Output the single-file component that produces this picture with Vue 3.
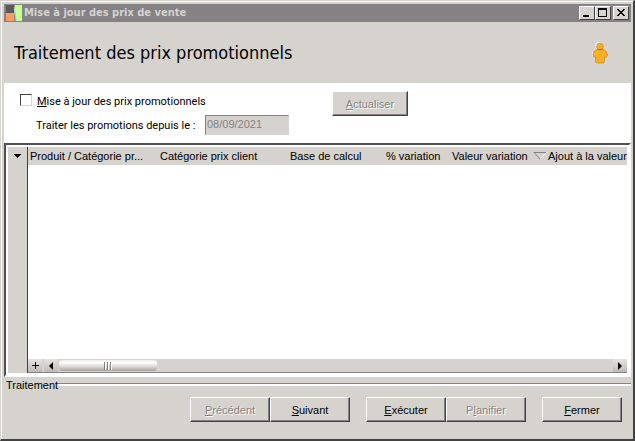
<template>
  <main class="window">
    <header class="title-bar">
      <svg class="app-icon" viewBox="0 0 16 17" aria-hidden="true">
        <path fill="#5a5a58" d="M0 0h8v8H0z" />
        <path fill="#ff9a63" d="M0 8h8v8H0z" />
        <path fill="#848284" d="M8 0h1v17H8z" />
        <path fill="#c6ff94" d="M9 0h7v16h-6L8 5z" />
        <path stroke="#a5c3d6" fill="none" d="M8.500 5l1.500 11" />
      </svg>
      <span class="title">Mise à jour des prix de vente</span>
      <div class="title-buttons">
        <button type="button" aria-label="Réduire">
          <svg viewBox="0 0 12 10"><path d="M2 7h6v2H2z" /></svg>
        </button>
        <button type="button" aria-label="Agrandir">
          <svg viewBox="0 0 12 10"><path fill-rule="evenodd" d="M1 0h9v9H1zM2 2v6h7V2z" /></svg>
        </button>
        <button type="button" class="close" aria-label="Fermer la fenêtre">
          <svg viewBox="0 0 12 10"><path d="M2 1h2v1h1v1h2V2h1V1h2v1H9v1H8v1H7v1h1v1h1v1h1v1H8V7H7V6H5v1H4v1H2V7h1V6h1V5h1V4H4V3H3V2H2z" /></svg>
        </button>
      </div>
    </header>

    <section class="banner">
      <h1>Traitement des prix promotionnels</h1>
      <svg class="person" viewBox="0 0 18 22" aria-hidden="true">
        <g fill="#fff" opacity=".7">
          <circle cx="8" cy="4" r="4" />
          <path d="M4 7h9l3 3v5h-3v5H4v-5l-3-1v-4z" />
        </g>
        <g fill="#ffae21" stroke="#c68a31" stroke-width=".8">
          <path d="M5.500 7.500h7l2.500 1.500 1.500 4-1 2h-2v4.500l-1 1.500h-7l-1-1.500V15l-2-.5-.5-2 1-3.500z" />
          <circle cx="9" cy="4.500" r="3.300" />
        </g>
        <path fill="none" stroke="#a57131" d="M6.500 7.700h5" />
      </svg>
    </section>

    <section class="options">
      <div class="fields">
        <label class="check">
          <input v-model="updatePrices" type="checkbox" />
          <span><u>M</u>ise à jour des prix promotionnels</span>
        </label>
        <div class="date-row">
          <label for="since">Traiter les promotions depuis le :</label>
          <input id="since" v-model="since" type="text" disabled />
        </div>
      </div>
      <button type="button" class="btn refresh" disabled><u>A</u>ctualiser</button>
    </section>

    <section class="grid">
      <button type="button" class="selector" aria-label="Colonnes">
        <svg viewBox="0 0 7 4"><path d="M0 0h7v1H6v1H5v1H4v1H3V3H2V2H1V1H0z" /></svg>
      </button>
      <div class="sheet">
        <table>
          <colgroup>
            <col v-for="col in columns" :key="col.label" :class="col.size" />
          </colgroup>
          <thead>
            <tr>
              <th v-for="col in columns" :key="col.label" scope="col">
                <svg v-if="col.sorted" class="sort" viewBox="0 0 14 8">
                  <path fill="none" stroke="#848284" d="M13 .5H1l6 6.500" />
                  <path fill="none" stroke="#fff" d="M13.500.5L7 7" />
                </svg>{{ col.label }}
              </th>
            </tr>
          </thead>
        </table>
        <div class="scrollbar">
          <button type="button" class="add" aria-label="Ajouter">
            <svg viewBox="0 0 7 7"><path d="M3 0h1v3h3v1H4v3H3V4H0V3h3z" /></svg>
          </button>
          <button type="button" class="arrow" aria-label="Défiler à gauche">
            <svg viewBox="0 0 4 8"><path d="M4 0v8L0 4z" /></svg>
          </button>
          <div class="track">
            <div class="thumb"><i></i><i></i><i></i></div>
          </div>
          <button type="button" class="arrow" aria-label="Défiler à droite">
            <svg viewBox="0 0 4 8"><path d="M0 0v8l4-4z" /></svg>
          </button>
        </div>
      </div>
    </section>

    <div class="group-line"><span>Traitement</span></div>

    <footer class="actions">
      <div v-for="(group, i) in actions" :key="i" class="action-group">
        <button
          v-for="action in group"
          :key="action.key"
          type="button"
          class="btn"
          :disabled="action.disabled"
        >{{ action.before }}<u>{{ action.key }}</u>{{ action.after }}</button>
      </div>
    </footer>
  </main>
</template>

<script setup>
import { ref } from 'vue';

const updatePrices = ref(false);
const since = ref('08/09/2021');

const columns = [
  { label: 'Produit / Catégorie pr...', size: 'wide' },
  { label: 'Catégorie prix client', size: 'wide' },
  { label: 'Base de calcul', size: 'medium' },
  { label: '% variation', size: 'small' },
  { label: 'Valeur variation', size: 'value' },
  { label: 'Ajout à la valeur', size: 'rest', sorted: true },
];

const actions = [
  [
    { key: 'P', after: 'récédent', disabled: true },
    { key: 'S', after: 'uivant' },
  ],
  [
    { key: 'E', after: 'xécuter' },
    { before: 'P', key: 'l', after: 'anifier', disabled: true },
  ],
  [{ key: 'F', after: 'ermer' }],
];
</script>

<style>
body {
  margin: 0;
  background: #d6d3ce;
}
</style>

<style scoped>
* {
  box-sizing: border-box;
}

.window {
  display: flex;
  flex-direction: column;
  min-height: 100vh;
  padding: 3px 2px 2px 3px;
  border: 1px solid #d6d3ce;
  border-right: 2px solid #424142;
  border-bottom: 2px solid #424142;
  box-shadow: inset 1px 1px #fff;
  background: #d6d3ce;
  color: #000;
  font-family: "Liberation Sans", Arial, sans-serif;
  font-size: 11px;
  line-height: 14px;
}

button,
input {
  font: inherit;
  color: inherit;
}

button {
  padding: 0;
}

/* title bar */
.title-bar {
  display: flex;
  align-items: center;
  height: 18px;
  padding: 0 2px;
  background: #848284;
  color: #d6d3ce;
}

.app-icon {
  width: 16px;
  height: 17px;
}

.title {
  flex: 1;
  margin-left: 2px;
  font-family: "DejaVu Sans Condensed", "DejaVu Sans", sans-serif;
  font-weight: bold;
}

.title-buttons {
  display: flex;
}

.title-buttons button {
  display: flex;
  width: 16px;
  height: 14px;
  padding: 1px;
  border: 1px solid;
  border-color: #fff #424142 #424142 #fff;
  background: #d6d3ce;
}

.title-buttons svg {
  width: 12px;
  height: 10px;
}

.title-buttons .close {
  margin-left: 2px;
}

/* banner */
.banner {
  display: flex;
  align-items: center;
  justify-content: space-between;
  height: 61px;
  padding: 0 22px 0 10px;
}

h1 {
  margin: 0;
  font-family: "DejaVu Sans Condensed", "DejaVu Sans", sans-serif;
  font-size: 18px;
  font-weight: normal;
  line-height: 22px;
}

.person {
  width: 18px;
  height: 22px;
}

/* options */
.options {
  display: flex;
  align-items: flex-start;
  height: 60px;
  padding: 8px 16px;
  background: #fff;
}

.fields {
  width: 312px;
}

.check {
  display: flex;
  align-items: center;
  gap: 5px;
  height: 20px;
}

.check input {
  appearance: none;
  width: 12px;
  height: 12px;
  margin: 0 0 2px;
  border: 1px solid;
  border-color: #424142 #d6d3ce #d6d3ce #424142;
  background: #fff;
}

.check input:checked {
  background: #424142;
}

.check span,
.date-row label {
  padding-top: 2px;
  font-family: Roboto, "Liberation Sans", sans-serif;
}

.date-row {
  display: flex;
  align-items: center;
  padding: 4px 0 0 16px;
}

.date-row label {
  width: 169px;
}

.date-row input {
  width: 84px;
  height: 20px;
  padding: 0 0 2px 1px;
  border: 1px solid;
  border-color: #848284 #d6d3ce #d6d3ce #848284;
  background: #d6d3ce;
  color: #848284;
}

.btn {
  width: 80px;
  height: 25px;
  border: 1px solid;
  border-color: #fff #424142 #424142 #fff;
  box-shadow: inset -1px -1px #848284;
  background: #d6d3ce;
}

.btn:disabled {
  color: #848284;
  text-shadow: 1px 1px #fff;
}

.refresh {
  width: 76px;
}

/* grid */
.grid {
  display: flex;
  flex: 1;
  border: 2px solid;
  border-color: #525152 #fff #fff #525152;
  padding: 2px;
  background: #fff;
}

.selector {
  display: flex;
  justify-content: center;
  width: 20px;
  padding-top: 7px;
  border: 0;
  border-right: 1px solid #424142;
  background: #d6d3ce;
}

.selector svg {
  width: 7px;
  height: 4px;
}

.sheet {
  display: flex;
  flex: 1;
  flex-direction: column;
  justify-content: space-between;
  min-width: 0;
}

table {
  width: 100%;
  table-layout: fixed;
  border-collapse: collapse;
  background: #d6d3ce;
}

.wide {
  width: 130px;
}

.medium {
  width: 96px;
}

.small {
  width: 66px;
}

.value {
  width: 81px;
}

th {
  height: 18px;
  padding: 0 0 0 2px;
  font-weight: normal;
  text-align: left;
  white-space: nowrap;
}

.sort {
  width: 14px;
  height: 8px;
  margin-right: 1px;
}

.scrollbar {
  display: flex;
  height: 14px;
  border-bottom: 1px solid #848284;
  background: #d6d3ce;
}

.scrollbar button {
  display: flex;
  align-items: center;
  justify-content: center;
  width: 14px;
  border: 0;
  background: linear-gradient(#e7e3de, #bdbab5);
}

.scrollbar .add {
  margin-right: 2px;
}

.add svg {
  width: 7px;
  height: 7px;
}

.arrow svg {
  width: 4px;
  height: 8px;
}

.track {
  flex: 1;
  padding: 1px;
}

.thumb {
  display: flex;
  align-items: center;
  justify-content: center;
  gap: 1px;
  width: 98px;
  height: 11px;
  border-radius: 3px;
  background: linear-gradient(#efebe7, #fff 25%, #d6d3ce 65%, #a5a29c);
}

.thumb i {
  width: 2px;
  height: 8px;
  border-left: 1px solid #848284;
  border-right: 1px solid #fff;
}

/* footer */
.group-line {
  display: flex;
  align-items: center;
  height: 15px;
  padding-left: 2px;
}

.group-line::after {
  content: "";
  flex: 1;
  height: 2px;
  border-top: 1px solid #848284;
  background: #fff;
}

.actions {
  display: flex;
  justify-content: flex-end;
  gap: 16px;
  padding: 5px 9px 15px;
}

.action-group {
  display: flex;
}
</style>
